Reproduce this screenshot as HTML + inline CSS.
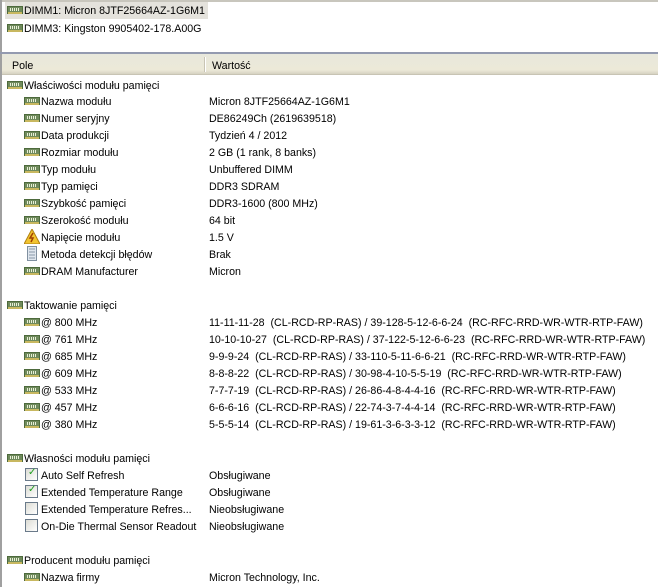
<!DOCTYPE html>
<html><head><meta charset="utf-8"><style>
*{margin:0;padding:0;box-sizing:border-box}
body{width:658px;height:587px;overflow:hidden;background:#fff;font-family:"Liberation Sans","DejaVu Sans",sans-serif;font-size:10.65px;color:#000;position:relative}
.a{position:absolute;white-space:nowrap;line-height:17px;height:17px;margin-top:1px}
.ic{position:absolute;width:16px;height:8px;background:#6f8a5c;border:1px solid #4d6a3c}
.ic:before{content:"";position:absolute;left:2px;right:2px;top:1px;height:3px;background:repeating-linear-gradient(90deg,#e8efd8 0 1px,#6f8a5c 1px 2px)}
.ic:after{content:"";position:absolute;left:0;right:0;bottom:-1px;height:2px;background:#c8b860}
.cb{position:absolute;width:13px;height:13px;border:1px solid #6a7a8a;background:linear-gradient(135deg,#dcdcd4,#fff)}
.ck{position:absolute;left:2px;top:-2px;color:#21a121;font-size:10px;font-weight:bold}
</style></head><body>
<div style="position:absolute;left:0;top:0;width:658px;height:2px;background:#c8c6bd"></div>
<div style="position:absolute;left:0;top:0;width:2px;height:587px;background:#a0a0a0"></div>
<div style="position:absolute;left:5px;top:2px;width:203px;height:17px;background:#e4e2dc"></div>
<div class="ic" style="left:7px;top:6px"></div><div class="a" style="left:24px;top:2px">DIMM1: Micron 8JTF25664AZ-1G6M1</div>
<div class="ic" style="left:7px;top:24px"></div><div class="a" style="left:24px;top:20px">DIMM3: Kingston 9905402-178.A00G</div>
<div style="position:absolute;left:0;top:52px;width:658px;height:2px;background:#939ab0"></div>
<div style="position:absolute;left:2px;top:54px;width:656px;height:21px;background:linear-gradient(#e8e8dc,#ece9d8 80%,#d6d2c2);border-bottom:1px solid #c8c4b4"></div>
<div style="position:absolute;left:204px;top:57px;width:1px;height:15px;background:#c8c4b4"></div>
<div style="position:absolute;left:205px;top:57px;width:1px;height:15px;background:#fff"></div>
<div class="a" style="left:12px;top:57px">Pole</div>
<div class="a" style="left:212px;top:57px">Wartość</div>

<div class="ic" style="left:7px;top:81px"></div><div class="a" style="left:24px;top:77px">Właściwości modułu pamięci</div>
<div class="ic" style="left:24px;top:97px"></div><div class="a" style="left:41px;top:93px">Nazwa modułu</div><div class="a" style="left:209px;top:93px">Micron 8JTF25664AZ-1G6M1</div>
<div class="ic" style="left:24px;top:114px"></div><div class="a" style="left:41px;top:110px">Numer seryjny</div><div class="a" style="left:209px;top:110px">DE86249Ch (2619639518)</div>
<div class="ic" style="left:24px;top:131px"></div><div class="a" style="left:41px;top:127px">Data produkcji</div><div class="a" style="left:209px;top:127px">Tydzień 4 / 2012</div>
<div class="ic" style="left:24px;top:148px"></div><div class="a" style="left:41px;top:144px">Rozmiar modułu</div><div class="a" style="left:209px;top:144px">2 GB (1 rank, 8 banks)</div>
<div class="ic" style="left:24px;top:165px"></div><div class="a" style="left:41px;top:161px">Typ modułu</div><div class="a" style="left:209px;top:161px">Unbuffered DIMM</div>
<div class="ic" style="left:24px;top:182px"></div><div class="a" style="left:41px;top:178px">Typ pamięci</div><div class="a" style="left:209px;top:178px">DDR3 SDRAM</div>
<div class="ic" style="left:24px;top:199px"></div><div class="a" style="left:41px;top:195px">Szybkość pamięci</div><div class="a" style="left:209px;top:195px">DDR3-1600 (800 MHz)</div>
<div class="ic" style="left:24px;top:216px"></div><div class="a" style="left:41px;top:212px">Szerokość modułu</div><div class="a" style="left:209px;top:212px">64 bit</div>
<svg style="position:absolute;left:24px;top:229px" width="16" height="15"><polygon points="8,0 16,15 0,15" fill="#f2c430" stroke="#b08010"/><path d="M9 4 L6 9 L9 9 L7 13" stroke="#a04000" stroke-width="1.5" fill="none"/></svg>
<div class="a" style="left:41px;top:229px">Napięcie modułu</div><div class="a" style="left:209px;top:229px">1.5 V</div>
<svg style="position:absolute;left:27px;top:246px" width="10" height="15"><rect x="0.5" y="0.5" width="9" height="14" fill="#dfe6ee" stroke="#8090a0"/><path d="M2 3H8M2 6H8M2 9H8M2 12H8" stroke="#8898a8"/></svg>
<div class="a" style="left:41px;top:246px">Metoda detekcji błędów</div><div class="a" style="left:209px;top:246px">Brak</div>
<div class="ic" style="left:24px;top:267px"></div><div class="a" style="left:41px;top:263px">DRAM Manufacturer</div><div class="a" style="left:209px;top:263px">Micron</div>

<div class="ic" style="left:7px;top:301px"></div><div class="a" style="left:24px;top:297px">Taktowanie pamięci</div>
<div class="ic" style="left:24px;top:318px"></div><div class="a" style="left:41px;top:314px">@ 800 MHz</div><div class="a" style="left:209px;top:314px">11-11-11-28 &nbsp;(CL-RCD-RP-RAS) / 39-128-5-12-6-6-24 &nbsp;(RC-RFC-RRD-WR-WTR-RTP-FAW)</div>
<div class="ic" style="left:24px;top:335px"></div><div class="a" style="left:41px;top:331px">@ 761 MHz</div><div class="a" style="left:209px;top:331px">10-10-10-27 &nbsp;(CL-RCD-RP-RAS) / 37-122-5-12-6-6-23 &nbsp;(RC-RFC-RRD-WR-WTR-RTP-FAW)</div>
<div class="ic" style="left:24px;top:352px"></div><div class="a" style="left:41px;top:348px">@ 685 MHz</div><div class="a" style="left:209px;top:348px">9-9-9-24 &nbsp;(CL-RCD-RP-RAS) / 33-110-5-11-6-6-21 &nbsp;(RC-RFC-RRD-WR-WTR-RTP-FAW)</div>
<div class="ic" style="left:24px;top:369px"></div><div class="a" style="left:41px;top:365px">@ 609 MHz</div><div class="a" style="left:209px;top:365px">8-8-8-22 &nbsp;(CL-RCD-RP-RAS) / 30-98-4-10-5-5-19 &nbsp;(RC-RFC-RRD-WR-WTR-RTP-FAW)</div>
<div class="ic" style="left:24px;top:386px"></div><div class="a" style="left:41px;top:382px">@ 533 MHz</div><div class="a" style="left:209px;top:382px">7-7-7-19 &nbsp;(CL-RCD-RP-RAS) / 26-86-4-8-4-4-16 &nbsp;(RC-RFC-RRD-WR-WTR-RTP-FAW)</div>
<div class="ic" style="left:24px;top:403px"></div><div class="a" style="left:41px;top:399px">@ 457 MHz</div><div class="a" style="left:209px;top:399px">6-6-6-16 &nbsp;(CL-RCD-RP-RAS) / 22-74-3-7-4-4-14 &nbsp;(RC-RFC-RRD-WR-WTR-RTP-FAW)</div>
<div class="ic" style="left:24px;top:420px"></div><div class="a" style="left:41px;top:416px">@ 380 MHz</div><div class="a" style="left:209px;top:416px">5-5-5-14 &nbsp;(CL-RCD-RP-RAS) / 19-61-3-6-3-3-12 &nbsp;(RC-RFC-RRD-WR-WTR-RTP-FAW)</div>

<div class="ic" style="left:7px;top:454px"></div><div class="a" style="left:24px;top:450px">Własności modułu pamięci</div>
<div class="cb" style="left:25px;top:468px"><span class="ck">✓</span></div><div class="a" style="left:41px;top:467px">Auto Self Refresh</div><div class="a" style="left:209px;top:467px">Obsługiwane</div>
<div class="cb" style="left:25px;top:485px"><span class="ck">✓</span></div><div class="a" style="left:41px;top:484px">Extended Temperature Range</div><div class="a" style="left:209px;top:484px">Obsługiwane</div>
<div class="cb" style="left:25px;top:502px"></div><div class="a" style="left:41px;top:501px">Extended Temperature Refres...</div><div class="a" style="left:209px;top:501px">Nieobsługiwane</div>
<div class="cb" style="left:25px;top:519px"></div><div class="a" style="left:41px;top:518px">On-Die Thermal Sensor Readout</div><div class="a" style="left:209px;top:518px">Nieobsługiwane</div>

<div class="ic" style="left:7px;top:556px"></div><div class="a" style="left:24px;top:552px">Producent modułu pamięci</div>
<div class="ic" style="left:24px;top:573px"></div><div class="a" style="left:41px;top:569px">Nazwa firmy</div><div class="a" style="left:209px;top:569px">Micron Technology, Inc.</div>
</body></html>
